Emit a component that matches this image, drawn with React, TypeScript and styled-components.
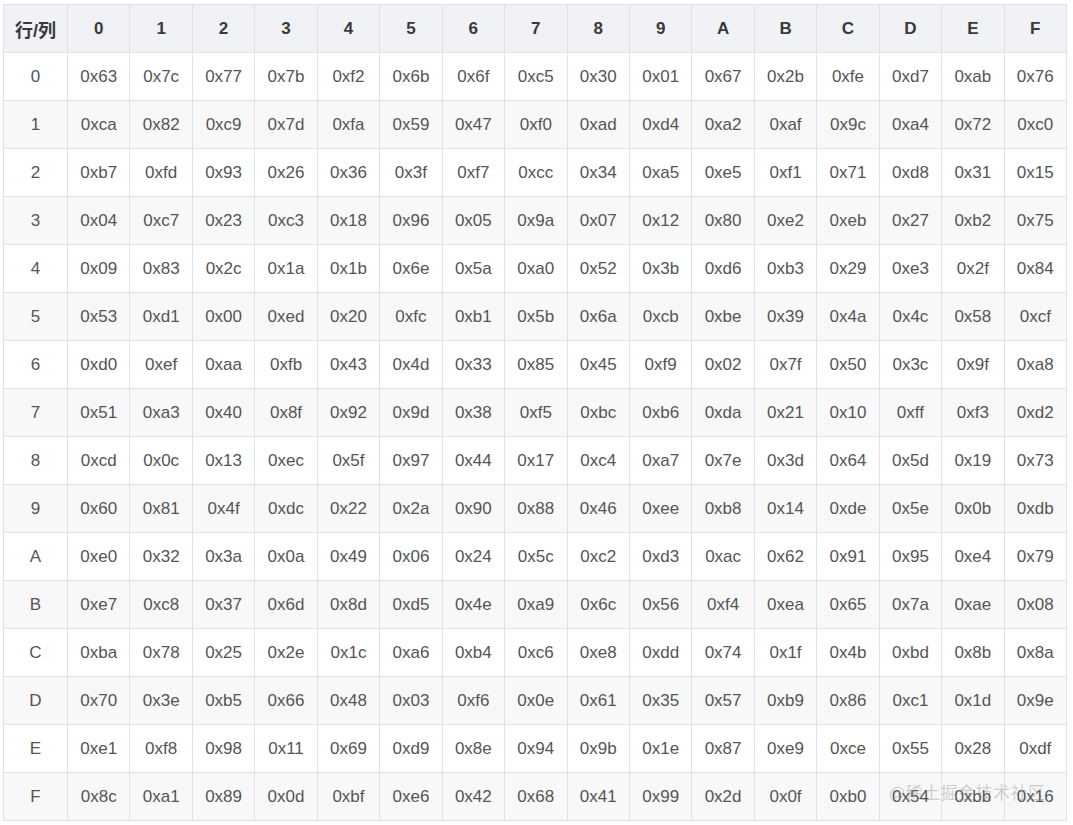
import React from "react";
import styled, { createGlobalStyle } from "styled-components";

const GlobalStyle = createGlobalStyle`
  html, body {
    margin: 0;
    padding: 0;
    background: #fff;
  }
`;

const Page = styled.div`
  position: relative;
  padding: 4px 0 0 3px;
  width: 1070px;
`;

const Table = styled.table`
  border-collapse: collapse;
  width: 1064px;
  table-layout: fixed;
  font-family: "Liberation Sans", Arial, "Noto Sans CJK SC", sans-serif;
  font-size: 17px;
  color: #555;
`;

const HeadCell = styled.th<{ $first?: boolean }>`
  height: 47px;
  padding: 0;
  background: #f0f2f5;
  border: 1px solid #dfe2e5;
  color: #3a3a3a;
  font-weight: bold;
  font-size: ${(p) => (p.$first ? "18px" : "17px")};
  font-family: "Liberation Sans", Arial, "Noto Sans CJK SC", sans-serif;
  text-align: center;
  width: ${(p) => (p.$first ? "63px" : "auto")};
`;

const Row = styled.tr<{ $odd: boolean }>`
  background: ${(p) => (p.$odd ? "#f8f8f8" : "#fff")};
`;

const Cell = styled.td`
  height: 47px;
  padding: 0;
  border: 1px solid #dfe2e5;
  text-align: center;
`;

const Watermark = styled.div`
  position: absolute;
  left: 889px;
  top: 779px;
  font-family: "Noto Sans CJK SC", sans-serif;
  font-size: 17px;
  color: rgba(120, 120, 120, 0.35);
  letter-spacing: 0.5px;
  pointer-events: none;
`;

const sbox = [
  0x63, 0x7c, 0x77, 0x7b, 0xf2, 0x6b, 0x6f, 0xc5, 0x30, 0x01, 0x67, 0x2b, 0xfe, 0xd7, 0xab, 0x76,
  0xca, 0x82, 0xc9, 0x7d, 0xfa, 0x59, 0x47, 0xf0, 0xad, 0xd4, 0xa2, 0xaf, 0x9c, 0xa4, 0x72, 0xc0,
  0xb7, 0xfd, 0x93, 0x26, 0x36, 0x3f, 0xf7, 0xcc, 0x34, 0xa5, 0xe5, 0xf1, 0x71, 0xd8, 0x31, 0x15,
  0x04, 0xc7, 0x23, 0xc3, 0x18, 0x96, 0x05, 0x9a, 0x07, 0x12, 0x80, 0xe2, 0xeb, 0x27, 0xb2, 0x75,
  0x09, 0x83, 0x2c, 0x1a, 0x1b, 0x6e, 0x5a, 0xa0, 0x52, 0x3b, 0xd6, 0xb3, 0x29, 0xe3, 0x2f, 0x84,
  0x53, 0xd1, 0x00, 0xed, 0x20, 0xfc, 0xb1, 0x5b, 0x6a, 0xcb, 0xbe, 0x39, 0x4a, 0x4c, 0x58, 0xcf,
  0xd0, 0xef, 0xaa, 0xfb, 0x43, 0x4d, 0x33, 0x85, 0x45, 0xf9, 0x02, 0x7f, 0x50, 0x3c, 0x9f, 0xa8,
  0x51, 0xa3, 0x40, 0x8f, 0x92, 0x9d, 0x38, 0xf5, 0xbc, 0xb6, 0xda, 0x21, 0x10, 0xff, 0xf3, 0xd2,
  0xcd, 0x0c, 0x13, 0xec, 0x5f, 0x97, 0x44, 0x17, 0xc4, 0xa7, 0x7e, 0x3d, 0x64, 0x5d, 0x19, 0x73,
  0x60, 0x81, 0x4f, 0xdc, 0x22, 0x2a, 0x90, 0x88, 0x46, 0xee, 0xb8, 0x14, 0xde, 0x5e, 0x0b, 0xdb,
  0xe0, 0x32, 0x3a, 0x0a, 0x49, 0x06, 0x24, 0x5c, 0xc2, 0xd3, 0xac, 0x62, 0x91, 0x95, 0xe4, 0x79,
  0xe7, 0xc8, 0x37, 0x6d, 0x8d, 0xd5, 0x4e, 0xa9, 0x6c, 0x56, 0xf4, 0xea, 0x65, 0x7a, 0xae, 0x08,
  0xba, 0x78, 0x25, 0x2e, 0x1c, 0xa6, 0xb4, 0xc6, 0xe8, 0xdd, 0x74, 0x1f, 0x4b, 0xbd, 0x8b, 0x8a,
  0x70, 0x3e, 0xb5, 0x66, 0x48, 0x03, 0xf6, 0x0e, 0x61, 0x35, 0x57, 0xb9, 0x86, 0xc1, 0x1d, 0x9e,
  0xe1, 0xf8, 0x98, 0x11, 0x69, 0xd9, 0x8e, 0x94, 0x9b, 0x1e, 0x87, 0xe9, 0xce, 0x55, 0x28, 0xdf,
  0x8c, 0xa1, 0x89, 0x0d, 0xbf, 0xe6, 0x42, 0x68, 0x41, 0x99, 0x2d, 0x0f, 0xb0, 0x54, 0xbb, 0x16,
];

const hexDigits = "0123456789ABCDEF".split("");
const fmt = (n: number) => "0x" + n.toString(16).padStart(2, "0");

export default function App() {
  return (
    <Page>
      <GlobalStyle />
      <Table>
        <thead>
          <tr>
            <HeadCell $first>行/列</HeadCell>
            {hexDigits.map((d) => (
              <HeadCell key={d}>{d}</HeadCell>
            ))}
          </tr>
        </thead>
        <tbody>
          {hexDigits.map((r, i) => (
            <Row key={r} $odd={i % 2 === 1}>
              <Cell>{r}</Cell>
              {sbox.slice(i * 16, i * 16 + 16).map((v, j) => (
                <Cell key={j}>{fmt(v)}</Cell>
              ))}
            </Row>
          ))}
        </tbody>
      </Table>
      <Watermark>@稀土掘金技术社区</Watermark>
    </Page>
  );
}
